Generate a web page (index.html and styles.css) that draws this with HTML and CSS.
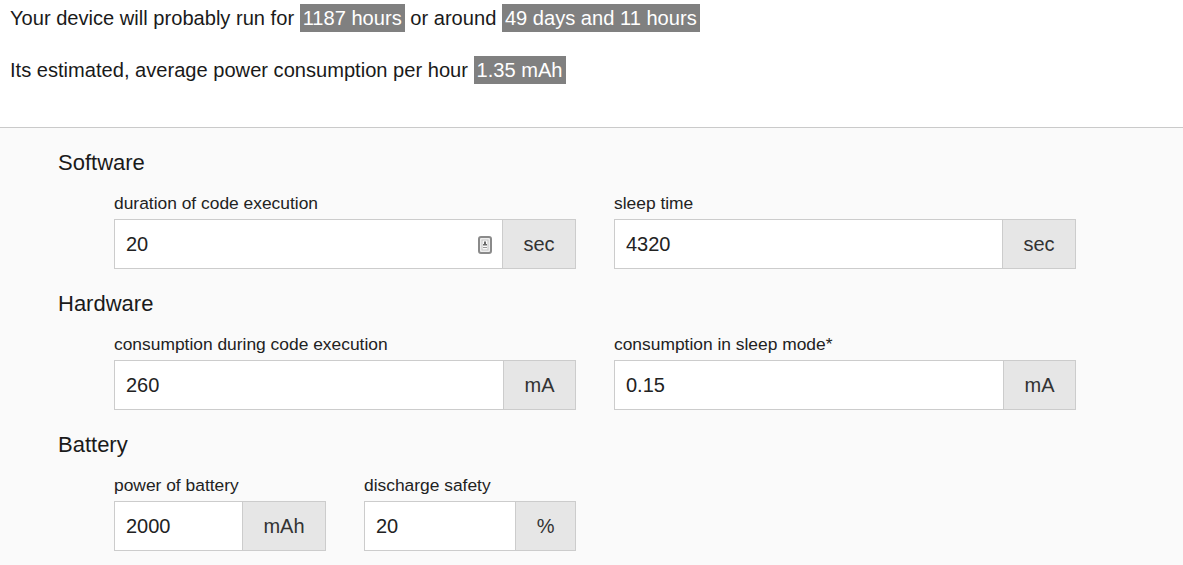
FILE: index.html
```html
<!DOCTYPE html>
<html lang="en">
<head>
<meta charset="utf-8">
<title>Battery runtime calculator</title>
<link rel="stylesheet" href="styles.css">
</head>
<body>
<div class="summary">
  <p>Your device will probably run for <span class="hl">1187 hours</span> or around <span class="hl">49 days and 11 hours</span></p>
  <p>Its estimated, average power consumption per hour <span class="hl">1.35 mAh</span></p>
</div>
<div class="form">
  <section class="group">
    <h2>Software</h2>
    <div class="fields two">
      <div class="field">
        <span class="label">duration of code execution</span>
        <div class="ig">
          <input class="val" type="text" value="20">
          <svg class="pm-icon" width="14" height="18" viewBox="0 0 14 18" aria-hidden="true">
            <rect x="1" y="1" width="12" height="16" rx="2" fill="#eeeeee" stroke="#8a8a8a" stroke-width="2"/>
            <rect x="4" y="4" width="6" height="10" fill="#fafafa" stroke="#c4c4c4" stroke-width="1"/>
            <rect x="6" y="5.5" width="2" height="2.5" fill="#6a6a6a"/>
            <rect x="5" y="8" width="4" height="1.5" fill="#6a6a6a"/>
            <rect x="5" y="11" width="4" height="1" fill="#9a9a9a"/>
          </svg>
          <span class="addon">sec</span>
        </div>
      </div>
      <div class="field">
        <span class="label">sleep time</span>
        <div class="ig">
          <input class="val" type="text" value="4320">
          <span class="addon">sec</span>
        </div>
      </div>
    </div>
  </section>
  <section class="group">
    <h2>Hardware</h2>
    <div class="fields two">
      <div class="field">
        <span class="label">consumption during code execution</span>
        <div class="ig">
          <input class="val" type="text" value="260">
          <span class="addon">mA</span>
        </div>
      </div>
      <div class="field">
        <span class="label">consumption in sleep mode*</span>
        <div class="ig">
          <input class="val" type="text" value="0.15">
          <span class="addon">mA</span>
        </div>
      </div>
    </div>
  </section>
  <section class="group">
    <h2>Battery</h2>
    <div class="fields four">
      <div class="field">
        <span class="label">power of battery</span>
        <div class="ig">
          <input class="val" type="text" value="2000">
          <span class="addon">mAh</span>
        </div>
      </div>
      <div class="field">
        <span class="label">discharge safety</span>
        <div class="ig">
          <input class="val" type="text" value="20">
          <span class="addon">%</span>
        </div>
      </div>
    </div>
  </section>
</div>
</body>
</html>
```
FILE: styles.css
```css
html, body {
  margin: 0;
  padding: 0;
  background: #ffffff;
}
body {
  font-family: "Liberation Sans", Arial, sans-serif;
  color: #1a1a1a;
}
.summary {
  padding: 7px 10px 0;
  margin-bottom: 45px;
  display: flex;
  flex-direction: column;
  gap: 29px;
}
.summary p {
  margin: 0;
  font-size: 20.1px;
  line-height: 23px;
}
.hl {
  background: #808080;
  color: #ffffff;
  padding: 3px 3px;
}
.form {
  border-top: 1px solid #cacaca;
  background: #fafafa;
  padding: 23px 0 40px 58px;
  display: flex;
  flex-direction: column;
  gap: 23px;
}
.group h2 {
  margin: 0;
  font-weight: normal;
  font-size: 22px;
  line-height: 24px;
  color: #1a1a1a;
}
.fields {
  margin: 18px 0 0 56px;
  display: grid;
  column-gap: 38px;
}
.fields.two {
  grid-template-columns: repeat(2, 462px);
}
.fields.four {
  grid-template-columns: repeat(4, 212px);
}
.field {
  display: flex;
  flex-direction: column;
}
.label {
  font-size: 17.4px;
  line-height: 20px;
  margin-bottom: 6px;
  color: #222222;
}
.ig {
  position: relative;
  display: flex;
  height: 50px;
  box-sizing: border-box;
  border: 1px solid #cccccc;
  background: #ffffff;
}
.val {
  flex: 1;
  min-width: 0;
  border: none;
  outline: none;
  background: #ffffff;
  font-family: "Liberation Sans", Arial, sans-serif;
  font-size: 20px;
  color: #222222;
  padding: 0 11px;
  margin: 0;
  height: 48px;
}
.addon {
  display: flex;
  align-items: center;
  justify-content: center;
  padding: 0 20.5px;
  border-left: 1px solid #cccccc;
  background: #e6e6e6;
  font-size: 20px;
  color: #333333;
}
.pm-icon {
  position: absolute;
  left: 363px;
  top: 16px;
}
```
